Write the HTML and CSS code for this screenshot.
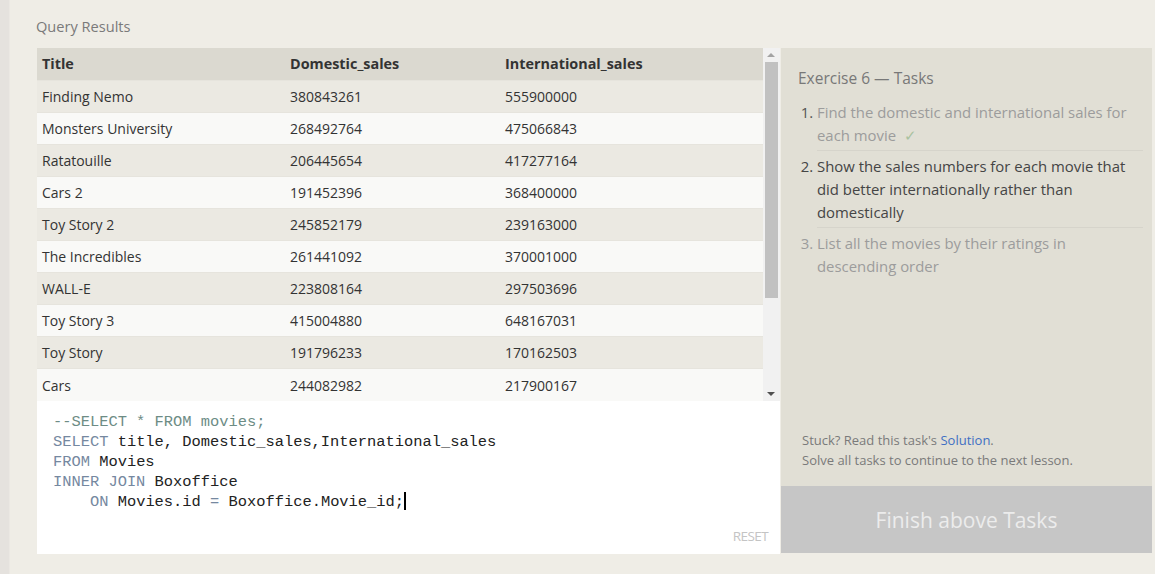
FILE: index.html
```html
<!DOCTYPE html>
<html>
<head>
<meta charset="utf-8">
<link rel="stylesheet" href="styles.css">
</head>
<body>
<div class="edge"></div>
<div class="main">
  <div class="title">Query Results</div>
  <div class="workspace">
    <div class="left">
      <div class="results">
        <table class="grid">
          <colgroup><col class="c1"><col class="c2"><col class="c3"></colgroup>
          <thead>
            <tr><th>Title</th><th>Domestic_sales</th><th>International_sales</th></tr>
          </thead>
          <tbody>
            <tr><td>Finding Nemo</td><td>380843261</td><td>555900000</td></tr>
            <tr><td>Monsters University</td><td>268492764</td><td>475066843</td></tr>
            <tr><td>Ratatouille</td><td>206445654</td><td>417277164</td></tr>
            <tr><td>Cars 2</td><td>191452396</td><td>368400000</td></tr>
            <tr><td>Toy Story 2</td><td>245852179</td><td>239163000</td></tr>
            <tr><td>The Incredibles</td><td>261441092</td><td>370001000</td></tr>
            <tr><td>WALL-E</td><td>223808164</td><td>297503696</td></tr>
            <tr><td>Toy Story 3</td><td>415004880</td><td>648167031</td></tr>
            <tr><td>Toy Story</td><td>191796233</td><td>170162503</td></tr>
            <tr><td>Cars</td><td>244082982</td><td>217900167</td></tr>
          </tbody>
        </table>
        <div class="scrollbar">
          <div class="arrow up"></div>
          <div class="track"><div class="thumb"></div></div>
          <div class="arrow down"></div>
        </div>
      </div>
      <div class="editor">
        <pre class="code"><span class="cm">--SELECT * FROM movies;</span>
<span class="kw">SELECT</span> title, Domestic_sales,International_sales
<span class="kw">FROM</span> Movies
<span class="kw">INNER JOIN</span> Boxoffice
    <span class="kw">ON</span> Movies.id <span class="kw">=</span> Boxoffice.Movie_id;<span class="cursor"></span></pre>
        <div class="reset">RESET</div>
      </div>
    </div>
    <div class="right">
      <div class="tasks">
        <div class="heading">Exercise 6 — Tasks</div>
        <ol class="list">
          <li class="done">Find the domestic and international sales for each movie <span class="check">✓</span></li>
          <li class="active">Show the sales numbers for each movie that did better internationally rather than domestically</li>
          <li class="todo">List all the movies by their ratings in descending order</li>
        </ol>
        <div class="hint">
          <div>Stuck? Read this task's <span class="link">Solution</span>.</div>
          <div>Solve all tasks to continue to the next lesson.</div>
        </div>
      </div>
      <div class="finish">Finish above Tasks</div>
    </div>
  </div>
</div>
</body>
</html>
```

FILE: styles.css
```css
* { box-sizing: border-box; }
html, body { margin: 0; padding: 0; }
body {
  background: #efede6;
  font-family: "Open Sans", "Noto Sans", sans-serif;
  display: flex;
  width: 1155px;
  height: 574px;
  overflow: hidden;
}
.edge {
  width: 10px;
  background: #e5e2de;
  border-right: 1px solid #ebe8e3;
  flex: none;
}
.main {
  flex: 1;
  padding: 16px 0 0 27px;
}
.title {
  font-size: 14.6px;
  line-height: 20px;
  color: #7a7a7a;
  margin-left: -1px;
  margin-bottom: 12px;
}
.workspace {
  display: flex;
  gap: 1px;
}
.left {
  width: 743px;
  display: flex;
  flex-direction: column;
}
.results {
  display: flex;
  height: 353px;
  background: #f9f9f7;
}
.grid {
  width: 726px;
  border-collapse: collapse;
  table-layout: fixed;
  font-size: 14px;
  color: #333;
}
.c1 { width: 248px; }
.c2 { width: 215px; }
.grid th {
  background: #dbd9d0;
  height: 32px;
  text-align: left;
  font-weight: 700;
  font-size: 14.4px;
  padding: 0 5px;
  color: #333;
}
.grid td {
  height: 32px;
  padding: 0 5px;
  border-top: 1px solid #e6e4dd;
}
.grid tbody tr:nth-child(odd) td { background: #ebe9e2; }
.grid tbody tr:nth-child(even) td { background: #f9f9f7; }
.scrollbar {
  width: 17px;
  background: #f1f1f1;
  display: flex;
  flex-direction: column;
  align-items: center;
}
.arrow {
  width: 17px;
  height: 14px;
  position: relative;
}
.arrow::after {
  content: "";
  position: absolute;
  left: 4px;
  width: 0; height: 0;
  border-left: 4px solid transparent;
  border-right: 4px solid transparent;
}
.arrow.up::after { top: 5px; border-bottom: 4px solid #a3a3a3; }
.arrow.down::after { top: 5px; border-top: 4px solid #505050; }
.track {
  flex: 1;
  width: 17px;
  padding: 0 2px;
}
.thumb {
  height: 236px;
  background: #c1c1c1;
}
.arrow.down { margin-top: auto; height: 14px; }
.editor {
  height: 153px;
  background: #fff;
  display: flex;
  flex-direction: column;
  padding: 11px 12px 9px 16px;
}
.code {
  margin: 0;
  font-family: "Liberation Mono", "DejaVu Sans Mono", monospace;
  font-size: 15.4px;
  line-height: 20px;
  color: #222;
}
.cm { color: #6d8c85; }
.kw { color: #7588a0; }
.cursor {
  display: inline-block;
  width: 2px;
  height: 18px;
  background: #000;
  vertical-align: -4px;
}
.reset {
  margin-top: auto;
  align-self: flex-end;
  font-size: 13.5px;
  color: #c4c4c4;
  letter-spacing: -0.6px;
  line-height: 18px;
}
.right {
  width: 371px;
  display: flex;
  flex-direction: column;
  height: 505px;
}
.tasks {
  flex: 1;
  background: #e1dfd5;
  padding: 18px 9px 16px 17px;
  display: flex;
  flex-direction: column;
}
.heading {
  font-size: 15.5px;
  line-height: 24px;
  color: #787878;
  margin-bottom: 7px;
}
.list {
  margin: 0;
  padding-left: 19px;
  font-size: 14.9px;
  line-height: 23px;
}
.list li {
  padding: 3.5px 0 3.5px;
  border-bottom: 1px solid #d6d4cb;
}
.list li:last-child { border-bottom: none; }
.done { color: #9c9c9c; }
.done::marker { color: #555; }
.active { color: #454545; }
.todo { color: #9c9c9c; }
.check { color: #a9c2a0; margin-left: 4px; }
.hint {
  margin-top: auto;
  font-size: 13px;
  line-height: 20px;
  color: #7a7a7a;
  padding-left: 4px;
}
.link { color: #3f6fc3; }
.finish {
  height: 67px;
  background: #c6c6c6;
  color: #ececec;
  font-size: 21px;
  display: flex;
  align-items: center;
  justify-content: center;
}
```
